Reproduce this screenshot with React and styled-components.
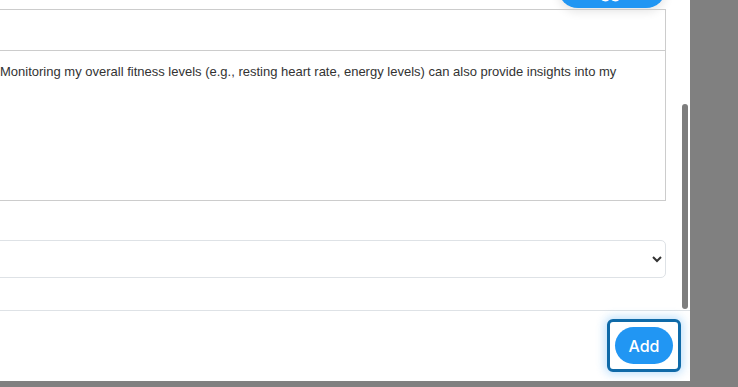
import React from "react";
import styled, { createGlobalStyle } from "styled-components";

const GlobalStyle = createGlobalStyle`
  html, body {
    margin: 0;
    padding: 0;
    height: 387px;
    overflow: hidden;
    background: #808080;
    font-family: "Liberation Sans", Arial, sans-serif;
  }
`;

const Modal = styled.div`
  width: 722px;
  height: 381px;
  margin-left: -32px;
  background: #fff;
  display: flex;
  flex-direction: column;
  overflow: hidden;
`;

const Body = styled.div`
  flex: 0 0 310px;
  display: flex;
  overflow: hidden;
`;

const Scroller = styled.div`
  flex: 1;
  padding: 0 16px;
  overflow: hidden;
`;

const Stack = styled.div`
  margin-top: -32px;
  display: flex;
  flex-direction: column;
`;

const TopRow = styled.div`
  display: flex;
  justify-content: flex-end;
  margin-bottom: 1px;
`;

const PillButton = styled.button`
  width: 108px;
  height: 40px;
  border: none;
  border-radius: 20px;
  background: #2196f3;
  color: #fff;
  font-family: Inter, "Open Sans", sans-serif;
  font-weight: 500;
  font-size: 16px;
  box-shadow: 0 4px 10px rgba(0, 0, 0, 0.1);
  padding: 8px 18px 0;
`;

const Toolbar = styled.div`
  height: 40px;
  border: 1px solid #ccc;
`;

const EditorArea = styled.div`
  box-sizing: border-box;
  height: 150px;
  border: 1px solid #ccc;
  border-top: 0;
  padding: 12px 15px;
  font-size: 13px;
  line-height: 1.42;
  color: #333;
  white-space: nowrap;
  overflow: hidden;
`;

const Select = styled.select`
  margin-top: 39px;
  height: 38px;
  width: 100%;
  border: 1px solid #dee2e6;
  border-radius: 5px;
  background: #fff;
  font-size: 14px;
  color: #333;
  padding: 0 8px;
`;

const Track = styled.div`
  width: 8px;
  flex: 0 0 8px;
`;

const Thumb = styled.div`
  margin-top: 104px;
  width: 6px;
  height: 205px;
  border-radius: 3px;
  background: #7e7e7e;
`;

const Footer = styled.div`
  flex: 1;
  border-top: 1px solid #dee2e6;
  display: flex;
  justify-content: flex-end;
  align-items: flex-start;
  padding: 8px 9px 0 0;
`;

const FocusRing = styled.div`
  padding: 5px;
  border: 3px solid #0f6aa8;
  border-radius: 6px;
  background: #fff;
  box-shadow: 0 0 10px 2px rgba(33, 150, 243, 0.3);
`;

const AddButton = styled.button`
  display: block;
  width: 58px;
  height: 37px;
  border: none;
  border-radius: 19px;
  background: #2196f3;
  color: #fff;
  font-family: Inter, "Open Sans", sans-serif;
  font-weight: 500;
  font-size: 16px;
  padding: 0;
`;

export default function App() {
  return (
    <>
      <GlobalStyle />
      <Modal>
        <Body>
          <Scroller>
            <Stack>
              <TopRow>
                <PillButton>Suggest</PillButton>
              </TopRow>
              <Toolbar />
              <EditorArea>
                Monitoring my overall fitness levels (e.g., resting heart rate, energy levels) can also provide insights into my
              </EditorArea>
              <Select defaultValue="">
                <option value=""></option>
              </Select>
            </Stack>
          </Scroller>
          <Track>
            <Thumb />
          </Track>
        </Body>
        <Footer>
          <FocusRing>
            <AddButton>Add</AddButton>
          </FocusRing>
        </Footer>
      </Modal>
    </>
  );
}
